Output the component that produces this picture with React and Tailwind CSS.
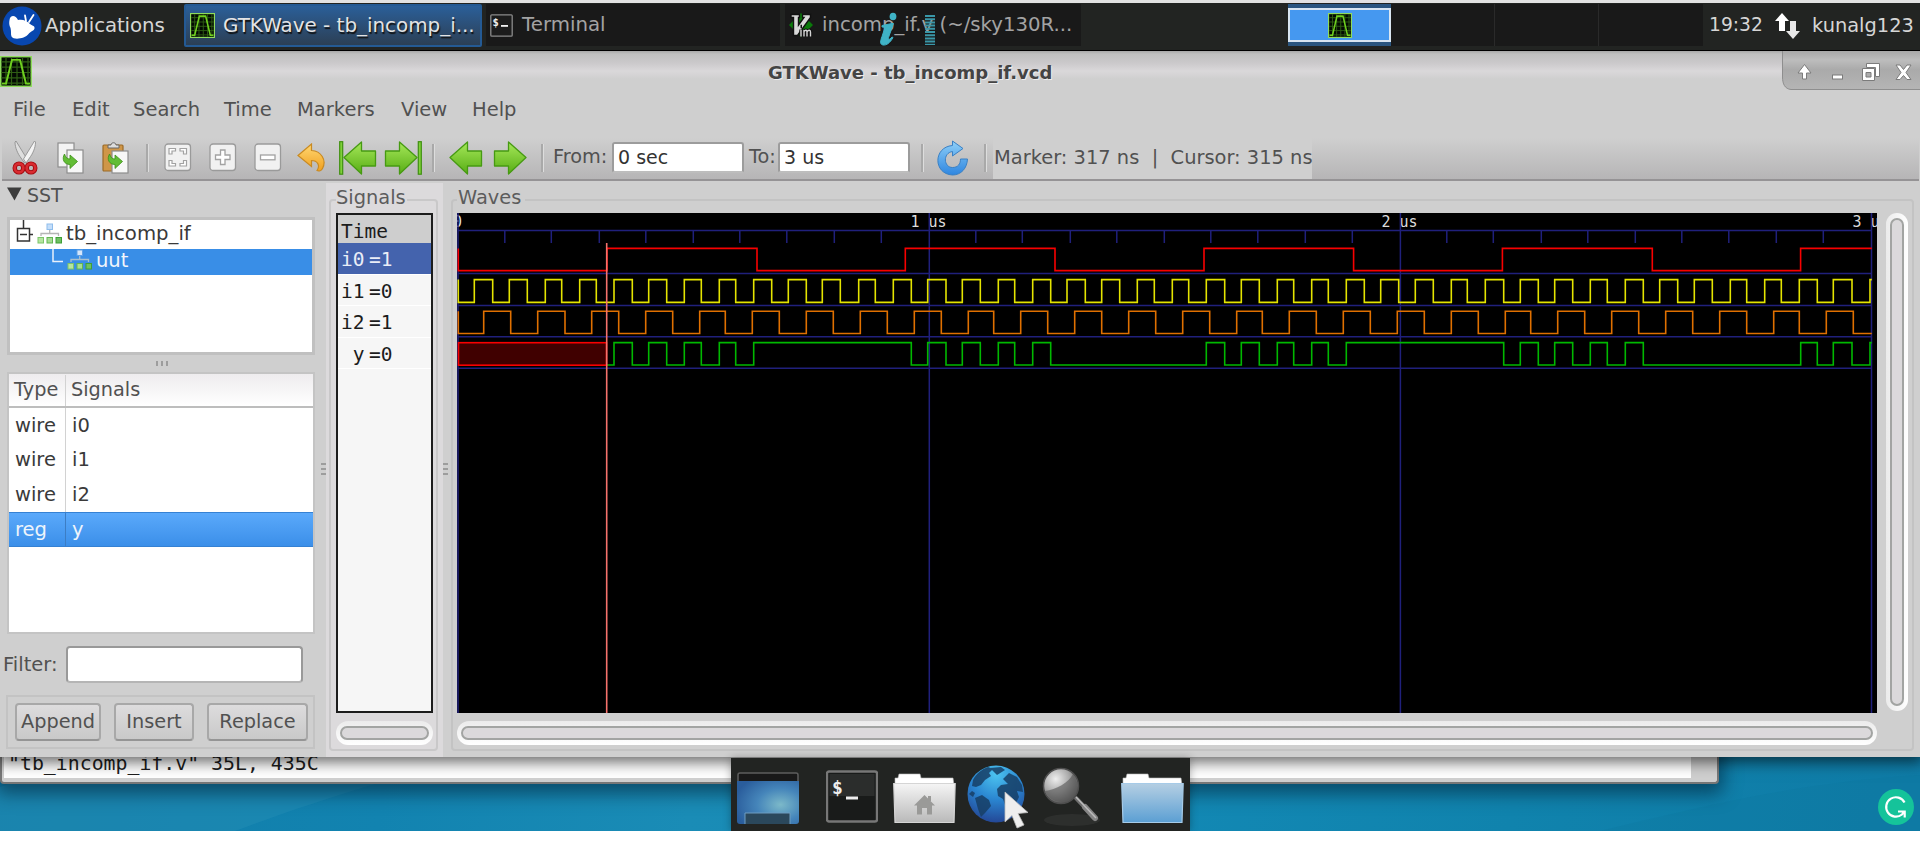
import React from "react";

const SANS = "font-['DejaVu_Sans',sans-serif]";
const MONO = "font-['DejaVu_Sans_Mono',monospace]";

/* ---------- icons ---------- */

function WaveLogo({ className }) {
  return (
    <svg className={className} viewBox="0 0 32 32" preserveAspectRatio="none">
      <rect width="32" height="32" fill="#8fdc5c" />
      <rect x="1.500" y="1.500" width="29" height="29" fill="#030a02" />
      <path d="M6 1.500V30.500M11.500 1.500V30.500M17 1.500V30.500M22.500 1.500V30.500M28 1.500V30.500M1.500 6H30.500M1.500 11.500H30.500M1.500 17H30.500M1.500 22.500H30.500M1.500 28H30.500" stroke="#2f5e14" strokeWidth="1.200" />
      <path d="M2 28.500H6L12 4H20L26 28.500H30" fill="none" stroke="#6fd01f" strokeWidth="2" />
    </svg>
  );
}

function MouseLogo() {
  return (
    <svg className="h-[40px] w-[40px]" viewBox="0 0 40 40">
      <circle cx="20" cy="20" r="19.500" fill="#0847b0" />
      <path d="M7.500 14C8 9 13.500 8.500 16 14C21 13 25 15 28 18C31 20 33 20 32.500 22.500C32 25 29 25 26.500 28C23 32.500 12 34.500 9.500 30.500C8.500 28 9.500 26 8.500 22C7 19 7 17 7.500 14Z" fill="#fff" />
      <path d="M24 15L23 9.500M27 16L31.500 9" stroke="#fff" strokeWidth="1.800" strokeLinecap="round" />
    </svg>
  );
}

function TerminalIcon({ className }) {
  return (
    <svg className={className} viewBox="0 0 52 52">
      <rect x="1" y="1" width="50" height="50" rx="2" fill="#191b1a" stroke="#777" strokeWidth="2.400" />
      <rect x="3.500" y="3.500" width="45" height="22" fill="#2b2d2c" />
      <text x="6" y="23" fontSize="18" fontWeight="bold" fill="#eee" className={MONO}>$</text>
      <rect x="20" y="26" width="12" height="3" fill="#eee" />
    </svg>
  );
}

function PanelTerminalIcon() {
  return (
    <svg className="h-[23px] w-[23px]" viewBox="0 0 23 23">
      <rect x=".8" y=".8" width="21.400" height="21.400" rx="1" fill="#1c1c1c" stroke="#8a8a8a" strokeWidth="1.300" />
      <text x="2.500" y="12" fontSize="10.500" fontWeight="bold" fill="#f0f0f0" className={MONO}>$</text>
      <rect x="11" y="11" width="7" height="1.800" fill="#f0f0f0" />
    </svg>
  );
}

function VimIcon() {
  return (
    <svg className="h-[25px] w-[24px]" viewBox="0 0 24 25">
      <path d="M12 0L24 12L12 24L0 12Z" fill="#0a7a0a" />
      <path d="M2 1.500H10.500V4.500H9.500V12L15 4.500H13.500V1.500H21.500V4.500L8.500 22.500H4.500V4.500H2Z" fill="#d9d9d9" stroke="#111" strokeWidth="1.400" />
      <path d="M12 16.500V23.500M15 23.500V17M15 18.500C16.500 16.500 18 17 18 19V23.500M18 19C19.500 16.500 21.500 17 21.500 19V23.500M11.500 13.500H13" stroke="#111" strokeWidth="3.400" fill="none" />
      <path d="M12 16.500V23.500M15 23.500V17M15 18.500C16.500 16.500 18 17 18 19V23.500M18 19C19.500 16.500 21.500 17 21.500 19V23.500" stroke="#d6d6d6" strokeWidth="1.400" fill="none" />
    </svg>
  );
}

function Gradients() {
  return (
    <svg className="absolute h-0 w-0">
      <defs>
        <linearGradient id="green" x1="0" y1="0" x2="0" y2="1">
          <stop offset="0" stopColor="#a6e85a" /><stop offset="1" stopColor="#57ad14" />
        </linearGradient>
        <linearGradient id="gold" x1="0" y1="0" x2="0" y2="1">
          <stop offset="0" stopColor="#ffd873" /><stop offset="1" stopColor="#f0a020" />
        </linearGradient>
        <linearGradient id="blue" x1="0" y1="0" x2="0" y2="1">
          <stop offset="0" stopColor="#8fd0f8" /><stop offset="1" stopColor="#2f86e0" />
        </linearGradient>
        <linearGradient id="paper" x1="0" y1="0" x2="0" y2="1">
          <stop offset="0" stopColor="#f5f5f5" /><stop offset="1" stopColor="#b9b9b9" />
        </linearGradient>
        <linearGradient id="sky" x1="0" y1="0" x2="0" y2="1">
          <stop offset="0" stopColor="#b5cfe3" /><stop offset="1" stopColor="#5b9fd3" />
        </linearGradient>
        <radialGradient id="globe" cx=".5" cy=".15" r=".9">
          <stop offset="0" stopColor="#4cc4f0" /><stop offset=".5" stopColor="#2a85d0" /><stop offset="1" stopColor="#23408f" />
        </radialGradient>
        <radialGradient id="screen" cx=".7" cy=".55" r=".75">
          <stop offset="0" stopColor="#7cb9c9" /><stop offset=".5" stopColor="#4585ba" /><stop offset="1" stopColor="#2a5d9c" />
        </radialGradient>
        <radialGradient id="lens" cx=".35" cy=".3" r=".7">
          <stop offset="0" stopColor="#eee" /><stop offset=".55" stopColor="#aaa" /><stop offset="1" stopColor="#5c5c5c" />
        </radialGradient>
      </defs>
    </svg>
  );
}

function Scissors() {
  return (
    <svg className="h-[34px] w-[27px]" viewBox="0 0 27 34">
      <path d="M3 1L4 0L15 18L12.500 22L9 17C6 13 3 7 3 1Z" fill="#dedede" stroke="#888" strokeWidth=".8" />
      <path d="M23.500 1L22.500 0L11.500 18L14 22L17.500 17C20.500 13 23.500 7 23.500 1Z" fill="#f4f4f4" stroke="#888" strokeWidth=".8" />
      <ellipse cx="7" cy="27" rx="4.300" ry="4.400" fill="none" stroke="#a30d12" strokeWidth="4.400" />
      <ellipse cx="19" cy="27" rx="4.300" ry="4.400" fill="none" stroke="#a30d12" strokeWidth="4.400" />
      <ellipse cx="7" cy="27" rx="4.300" ry="4.400" fill="none" stroke="#d92b30" strokeWidth="2.600" />
      <ellipse cx="19" cy="27" rx="4.300" ry="4.400" fill="none" stroke="#d92b30" strokeWidth="2.600" />
    </svg>
  );
}

const TURN = "M8.500 13C5.500 18 8 23.500 14 23.500V27.500L21.500 20.500L14 14V18C11.500 18 9.500 16.500 8.500 13Z";

function CopyIcon() {
  return (
    <svg className="h-[32px] w-[28px]" viewBox="0 0 28 32">
      <rect x="1" y="1" width="16" height="24" fill="#f3f3f3" stroke="#8d8d8d" strokeWidth="1.200" />
      <rect x="10" y="8" width="16" height="23" fill="#f7f7f7" stroke="#8d8d8d" strokeWidth="1.200" />
      <path d={TURN} transform="translate(-1 -1)" fill="#62bd35" stroke="#3c8f17" strokeWidth=".8" />
    </svg>
  );
}

function PasteIcon() {
  return (
    <svg className="h-[32px] w-[28px]" viewBox="0 0 28 32">
      <rect x="1" y="3" width="20" height="26" rx="1" fill="#cf9648" stroke="#9c6a26" strokeWidth="1.200" />
      <path d="M6 6V3H9C9 0 14 0 14 3H17V6Z" fill="#ddd" stroke="#666" strokeWidth="1" />
      <rect x="10" y="9" width="16" height="22" fill="#f7f7f7" stroke="#8d8d8d" strokeWidth="1.200" />
      <path d={TURN} transform="translate(-1 -1)" fill="#62bd35" stroke="#3c8f17" strokeWidth=".8" />
    </svg>
  );
}

function ZoomBox({ kind }) {
  return (
    <svg className="h-[29px] w-[28px]" viewBox="0 0 28 29">
      <rect x="1" y="1" width="25.500" height="26.500" rx="3" fill="#f1f1f1" stroke="#9a9a9a" strokeWidth="1.300" />
      {kind === "fit" && (
        <path d="M5 11V5.500H11.500V8H8V11ZM16 5.500H22.500V11H19.500V8H16ZM5 17.500V23H11.500V20.500H8V17.500ZM22.500 17.500V23H16V20.500H19.500V17.500Z" fill="#fff" stroke="#a2a2a2" strokeWidth="1.200" />
      )}
      {kind === "in" && (
        <path d="M11.500 7H16V12H21V16.500H16V21.500H11.500V16.500H6.500V12H11.500Z" fill="#fff" stroke="#a2a2a2" strokeWidth="1.300" />
      )}
      {kind === "out" && <rect x="6.500" y="12" width="14.500" height="4.800" fill="#fff" stroke="#a2a2a2" strokeWidth="1.300" />}
    </svg>
  );
}

function UndoIcon() {
  return (
    <svg className="h-[29px] w-[29px]" viewBox="0 0 29 29">
      <path d="M1 12.500L14.500 1V7.500C24 8 30 17 25.500 25.500C24.500 27.500 22 28.500 20 27.500C23.500 22.500 20.500 17.500 14.500 17.500V23.500Z" fill="url(#gold)" stroke="#c98a22" strokeWidth="1.200" />
    </svg>
  );
}

function ArrowIcon({ right, bar }) {
  const w = bar ? 38 : 34;
  return (
    <svg className={(bar ? "w-[38px]" : "w-[34px]") + " h-[34px]" + (right ? " -scale-x-100" : "")} viewBox={`0 0 ${w} 34`}>
      {bar && <rect x=".7" y=".7" width="3" height="32.500" fill="#7fd03a" stroke="#3f8f10" strokeWidth="1.200" />}
      <g transform={bar ? "translate(4 0)" : ""}>
        <path d="M1 16.500L18.500 1V10H32.500V25H18.500V33Z" fill="url(#green)" stroke="#469a12" strokeWidth="1.300" strokeLinejoin="round" />
      </g>
    </svg>
  );
}

function ReloadIcon() {
  return (
    <svg className="h-[36px] w-[31px]" viewBox="0 0 31 36">
      <path d="M15.500 1L26 8.500L15.500 16V11.500C5.500 13 6.500 27.500 15.500 27.500C21 27.500 23.500 24 23.500 19H30.500C30 28.500 24 35 15.500 35C-4 34 -4 7 15.500 5.500Z" fill="url(#blue)" stroke="#3a80c4" strokeWidth="1" />
    </svg>
  );
}

function HierarchyIcon({ selected }) {
  return (
    <svg className="h-[21px] w-[26px] shrink-0" viewBox="0 0 26 21">
      <rect x="10" y="1" width="5.500" height="5.500" fill={selected ? "#d6e6fa" : "#c4defa"} stroke={selected ? "#5d9fe8" : "#8fbdec"} />
      <path d="M12.700 7V10M4 13V10.500H21.500V13" fill="none" stroke={selected ? "#a9c0cf" : "#b5b5b5"} strokeWidth="1.300" />
      <rect x="1" y="14.500" width="5.500" height="5.500" fill="#b5e5a0" stroke="#7cc46a" />
      <rect x="10" y="14.500" width="5.500" height="5.500" fill="#a6dd93" stroke="#62b552" />
      <rect x="19" y="14.500" width="5.500" height="5.500" fill="#6fc062" stroke="#3f9f37" />
    </svg>
  );
}

/* ---------- top panel ---------- */

function TopPanel() {
  return (
    <div className={`flex h-[48px] w-full items-start border-b border-black bg-[#222422] text-[19px] text-[#d6d6d6] ${SANS}`}>
      <div className="flex h-[45px] w-[184px] items-center pl-[2px]">
        <MouseLogo />
        <span className="ml-[3px] text-[19.800px] leading-[24px] tracking-[-0.1px]">Applications</span>
      </div>
      <div className="mt-[1px] flex h-[43px] w-[298px] items-center rounded-[2px] border-2 border-[#245a94] bg-linear-to-b from-[#2a5f99] to-[#2b3f55] pl-[4px] text-[#e4e4e4]">
        <WaveLogo className="h-[25px] w-[25px]" />
        <span className="ml-[8px] mt-[1px] whitespace-nowrap text-[19.900px] [text-shadow:1px_2px_1px_#111]">GTKWave - tb_incomp_i...</span>
      </div>
      <div className="ml-[4px] mt-[1px] flex h-[42px] w-[294px] items-center bg-[#191919] pl-[4px] text-[#a3a3a3]">
        <PanelTerminalIcon />
        <span className="ml-[9px] text-[19.800px]">Terminal</span>
      </div>
      <div className="relative ml-[5px] mt-[1px] flex h-[42px] w-[296px] items-center bg-[#191919] pl-[4px] text-[#a3a3a3]">
        <VimIcon />
        <span className="ml-[9px] whitespace-nowrap text-[19.700px]">incomp_if.v (~/sky130R...</span>
        <svg className="absolute left-[95px] top-[8px] h-[34px] w-[60px]" viewBox="0 0 60 34">
          <ellipse cx="13" cy="4.500" rx="3.400" ry="3.800" fill="#3fb3c6" />
          <path d="M2 13.500L12 11.500H13.500L8.500 25.500C8 28 9.500 28 12 25L13 25.500C10 31 6.500 33.500 3 33C-.5 32.500 .5 28.500 2 24.500L4.500 17C5 15.500 4 15 2 15Z" fill="#3fb3c6" stroke="#3fb3c6" strokeWidth="1" />
          <path d="M50 3V33" stroke="#3a97a8" strokeWidth="10" strokeDasharray="2 1.200" />
        </svg>
      </div>
      <div className="ml-[207px] mt-[1px] flex h-[42px] w-[415px] bg-[#191919]">
        <div className="flex w-[103px] flex-col border-y-[4px] border-[#2b5680]">
          <div className="flex flex-1 items-center justify-center border-2 border-[#d9e6f2] bg-[#4598f0]">
            <WaveLogo className="h-[25px] w-[24px]" />
          </div>
        </div>
        <div className="w-[104px] border-r border-[#2a2a2a]" />
        <div className="w-[104px] border-r border-[#2a2a2a]" />
        <div className="flex-1" />
      </div>
      <div className="flex h-[45px] items-center">
        <span className="ml-[6px] w-[65px] text-[18.700px]">19:32</span>
        <svg className="h-[26px] w-[27px]" viewBox="0 0 27 26">
          <path d="M8 0L15 8H11V18H5V8H1Z" fill="#fff" />
          <path d="M19 26L26 18H22V8H16V18H12Z" fill="#e8e8e8" />
        </svg>
        <span className="ml-[11px] text-[19.400px]">kunalg123</span>
      </div>
    </div>
  );
}

/* ---------- window chrome ---------- */

function TitleBar() {
  return (
    <div className="relative flex h-[39px] bg-[linear-gradient(#a8a8a8_0px,#c0c0c0_3px,#cbc9cb_12px,#dad8da_20px,#cfcfcf_28px,#cfcfcf_100%)]">
      <WaveLogo className="mt-[5px] h-[31px] w-[32px]" />
      <span className="mt-[11px] ml-[736px] text-[18px] leading-[22px] font-bold whitespace-nowrap text-[#444] [text-shadow:1px_1px_0_#eee]">
        GTKWave - tb_incomp_if.vcd
      </span>
      <svg className="ml-auto h-[39px] w-[138px]" viewBox="0 0 138 39">
        <defs>
          <linearGradient id="ctl" x1="0" y1="0" x2="0" y2="1">
            <stop offset="0" stopColor="#a5a5a5" /><stop offset=".25" stopColor="#bdbdbd" /><stop offset=".5" stopColor="#aaa" /><stop offset="1" stopColor="#b5b5b5" />
          </linearGradient>
        </defs>
        <path d="M.5 -1V26C.5 33 3 38 9 38.500H139V-1Z" fill="url(#ctl)" stroke="#8e8e8e" />
        <g stroke="#7b7b7b" strokeWidth="1" fill="#fff">
          <path d="M22.500 13.500L29 22H24.500V28H20.500V22H16Z" />
          <rect x="50.500" y="24" width="10" height="4" />
          <path d="M84.500 12.500H97.500V25.500H93.500V16.500H84.500Z" />
          <path d="M80.500 17.500H92.500V29.500H80.500ZM84 21.500V26H89V21.500Z" fillRule="evenodd" />
          <path d="M114 14H118L121.500 18.500L125 14H129L124 21.500L129 28.500H125L121.500 24.500L118 28.500H114L119 21.500Z" />
        </g>
      </svg>
    </div>
  );
}

function MenuBar() {
  return (
    <div className="flex h-[48px] items-start pt-[8px] pl-[13px] text-[19.500px] leading-[24px] text-[#515151]">
      <span className="w-[59px]">File</span>
      <span className="w-[61px]">Edit</span>
      <span className="w-[91px]">Search</span>
      <span className="w-[73px]">Time</span>
      <span className="w-[104px]">Markers</span>
      <span className="w-[71px]">View</span>
      <span>Help</span>
    </div>
  );
}

function Sep() {
  return <div className="h-[28px] w-[3px] border-l-2 border-[#a9a9a9] bg-[#ddd]" />;
}

function ToolBar() {
  return (
    <div className="flex h-[45px] items-start border-b-2 border-[#cfcfcf] pl-[2px]">
      <div className="flex h-[43px] w-[1917px] items-center border-b-2 border-[#959395] bg-linear-to-b from-[#cfcfcf] to-[#b6b5b6] text-[19.300px] text-[#515151]">
        <div className="mb-[2px] ml-[10px] flex items-center">
          <div className="w-[45px]"><Scissors /></div>
          <div className="w-[45px]"><CopyIcon /></div>
          <div className="w-[44px]"><PasteIcon /></div>
          <div className="w-[18px]"><Sep /></div>
          <div className="w-[45px]"><ZoomBox kind="fit" /></div>
          <div className="w-[45px]"><ZoomBox kind="in" /></div>
          <div className="w-[43px]"><ZoomBox kind="out" /></div>
          <div className="w-[42px]"><UndoIcon /></div>
          <div className="w-[45px]"><ArrowIcon bar /></div>
          <div className="w-[48px]"><ArrowIcon right bar /></div>
          <div className="w-[17px]"><Sep /></div>
          <div className="w-[44px]"><ArrowIcon /></div>
          <div className="w-[48px]"><ArrowIcon right /></div>
          <div className="w-[12px]"><Sep /></div>
          <span className="w-[59px]">From:</span>
          <div className="flex h-[31px] w-[132px] items-center rounded-[3px] border-2 border-[#9c9c9c] border-b-[#bdbdbd] bg-white pl-[4px] text-[19px] text-[#333]">0 sec</div>
          <span className="ml-[5px] w-[29px]">To:</span>
          <div className="flex h-[31px] w-[132px] items-center rounded-[3px] border-2 border-[#9c9c9c] border-b-[#bdbdbd] bg-white pl-[4px] text-[19px] text-[#333]">3 us</div>
          <div className="ml-[11px] w-[16px]"><Sep /></div>
          <div className="w-[47px]"><ReloadIcon /></div>
          <div className="w-[9px]"><Sep /></div>
        </div>
        <div className="flex h-full w-[319px] items-center bg-[#cfcfcf] pb-[2px] pl-[1px] text-[19.450px] whitespace-pre">Marker: 317 ns  |  Cursor: 315 ns</div>
      </div>
    </div>
  );
}

/* ---------- left pane ---------- */

function Grip({ vertical }) {
  return (
    <div className={vertical ? "flex flex-col gap-[3px]" : "flex gap-[3px]"}>
      {[0, 1, 2].map((i) => (
        <div key={i} className={vertical ? "h-[2px] w-[5px] bg-[#9d9d9d]" : "h-[5px] w-[2px] bg-[#9d9d9d]"} />
      ))}
    </div>
  );
}

function SignalRow({ type, name, selected }) {
  return (
    <div className={"flex h-[34.700px] items-center " + (selected ? "border-y border-[#3581d3] bg-linear-to-b from-[#5aa9fb] to-[#3b8fe9] text-[#eef4fb]" : "text-[#3a3a3a]")}>
      <span className={"flex h-full w-[57px] items-center border-r pl-[6px] " + (selected ? "border-[#3c7dc4]" : "border-[#d2d2d2]")}>{type}</span>
      <span className="pl-[6px]">{name}</span>
    </div>
  );
}

function GtkButton({ children, className }) {
  return (
    <button className={"h-[38px] rounded-[4px] border-2 border-[#a8a8a8] border-b-[#959595] bg-linear-to-b from-[#dddcdd] to-[#c9c9c9] text-center text-[19.300px] text-[#515151] " + className}>
      {children}
    </button>
  );
}

function LeftPane() {
  return (
    <div className="flex w-[326px] shrink-0">
      <div className="flex w-[318px] flex-col text-[19.500px] text-[#515151]">
        <div className="flex h-[34px] items-start pl-[7px]">
          <svg className="mt-[4px] h-[14px] w-[15px]" viewBox="0 0 15 14"><path d="M0 .5H14.500L7.500 13.500Z" fill="#3c3c3c" /></svg>
          <span className="ml-[5px] leading-[25px] text-[19px]">SST</span>
        </div>
        <div className="ml-[7px] flex h-[138px] w-[308px] flex-col border-[3px] border-[#c0c0c0] bg-white">
          <div className="flex h-[29px] items-start pl-[6px]">
            <svg className="h-[24px] w-[17px]" viewBox="0 0 17 24">
              <path d="M7.500 0V8M13.500 14.500H17" stroke="#333" strokeWidth="1.500" />
              <rect x="1.500" y="8.500" width="12" height="12.500" fill="#fff" stroke="#333" strokeWidth="1.500" />
              <path d="M4 14.500H11" stroke="#333" strokeWidth="1.500" />
            </svg>
            <div className="ml-[4px] mt-[3px]"><HierarchyIcon /></div>
            <span className="ml-[3px] mt-[2px] text-[19.700px] leading-[24px] text-[#3a3a3a]">tb_incomp_if</span>
          </div>
          <div className="flex h-[26px] items-start bg-[#398ee7] pl-[42px]">
            <svg className="h-[16px] w-[12px]" viewBox="0 0 12 16"><path d="M1 0V12.500H11" fill="none" stroke="#e8f0fa" strokeWidth="1.500" /></svg>
            <div className="ml-[3px]"><HierarchyIcon selected /></div>
            <span className="ml-[3px] leading-[24px] text-[#f2f6fb]">uut</span>
          </div>
        </div>
        <div className="flex h-[17px] items-center pl-[156px]"><Grip /></div>
        <div className="ml-[7px] h-[262px] w-[308px] border-2 border-[#c4c4c4] bg-white">
          <div className="flex h-[34px] items-center border-b-2 border-[#bdbdbd] bg-linear-to-b from-[#eeecee] to-white pt-[1px] text-[19.300px]">
            <span className="flex h-full w-[57px] items-center border-r border-[#d2d2d2] pl-[5px]">Type</span>
            <span className="pl-[5px]">Signals</span>
          </div>
          <SignalRow type="wire" name="i0" />
          <SignalRow type="wire" name="i1" />
          <SignalRow type="wire" name="i2" />
          <SignalRow type="reg" name="y" selected />
        </div>
        <div className="flex h-[61px] items-center pl-[3px]">
          <span className="w-[63px]">Filter:</span>
          <div className="h-[37px] w-[237px] rounded-[4px] border-2 border-[#999] border-b-[#b5b5b5] bg-white" />
        </div>
        <div className="ml-[6px] flex h-[54px] w-[309px] items-center border-2 border-[#c3c3c3] pl-[7px]">
          <GtkButton className="w-[86px]">Append</GtkButton>
          <GtkButton className="ml-[13px] w-[80px]">Insert</GtkButton>
          <GtkButton className="ml-[13px] w-[101px]">Replace</GtkButton>
        </div>
      </div>
      <div className="mt-[280px] ml-[3px]"><Grip vertical /></div>
    </div>
  );
}

/* ---------- signals pane ---------- */

function NameRow({ name, value, selected }) {
  return (
    <div className={"flex h-[31.500px] items-center border-b-[1.500px] border-white pt-[3px] pl-[3px] whitespace-pre " + (selected ? "bg-[#4463ad] text-[#e9edf7]" : "")}>
      <span className="w-[28px]">{name}</span>
      <span>={value}</span>
    </div>
  );
}

function HScroll({ className }) {
  return (
    <div className={"flex h-[24px] items-center rounded-full bg-linear-to-b from-[#ebebeb] to-white px-[4px] " + className}>
      <div className="h-[14px] flex-1 rounded-full border-2 border-[#a2a4a2] bg-[#dbd9db]" />
    </div>
  );
}

function SignalsPane() {
  return (
    <div className="flex w-[117px] shrink-0 flex-col bg-[#dcdadc] pt-[16px] pl-[3px]">
      <div className="flex h-[552px] w-[109px] flex-col rounded-[4px] border-2 border-[#c9c8c9] pl-[5px]">
        <span className="mt-[-16px] mb-[4px] h-[24px] w-[71px] bg-[#dcdadc] text-[19.400px] leading-[25px] text-[#5c5c5c]">Signals</span>
        <div className={`h-[500px] w-[97px] border-2 border-[#1c1c1c] bg-[#f6f6f6] text-[19.500px] text-[#1c1c1c] ${MONO}`}>
          <div className="flex h-[28px] items-center bg-[#cecece] pl-[3px] pt-[6px]">Time</div>
          <NameRow name="i0" value="1" selected />
          <NameRow name="i1" value="0" />
          <NameRow name="i2" value="1" />
          <NameRow name=" y" value="0" />
        </div>
        <HScroll className="mt-[8px] w-[97px]" />
      </div>
    </div>
  );
}

/* ---------- waves ---------- */

const ORIGIN = 458.3;
const END = 1871.8;
const at = (base, list) => list.map((v) => base + v / 3);

const I0 = [607, 757, 905.3, 1055, 1204, 1353.6, 1502.4, 1652.3, 1800.6];
const I1 = [
  ...at(440, [103, 158, 208, 262, 316, 365, 419, 469, 522, 577, 626, 680, 733, 784, 838, 887, 941, 995, 1045, 1099, 1147, 1201, 1256, 1306, 1360, 1414, 1463, 1518]),
  ...at(940, [67, 121, 175, 224, 278, 332, 381, 436, 485, 539, 592, 643, 697, 746, 799, 854, 904, 958, 1012, 1061, 1115, 1165, 1219, 1273, 1322, 1376, 1426, 1480]),
  ...at(1420, [94, 142, 196, 251, 301, 355, 404, 458, 511, 562, 616, 670, 719, 773, 823, 877, 931, 980, 1034, 1084, 1138, 1192, 1240, 1296, 1350]),
];
const I2 = [
  ...at(440, [131, 212, 293, 375, 455, 536, 617, 698, 779, 856, 937, 1018, 1099, 1180, 1261, 1342, 1423, 1504]),
  ...at(940, [85, 161, 242, 323, 404, 485, 566, 647, 728, 809, 890, 967, 1048, 1129, 1210, 1291, 1372, 1453]),
  ...at(1420, [94, 175, 256, 332, 413, 494, 575, 656, 737, 818, 899, 980, 1061, 1138, 1219, 1300]),
];
const Y = [
  ...at(440, [522, 577, 626, 680, 733, 784, 838, 887, 941, 1414, 1463, 1518]),
  ...at(940, [67, 121, 175, 224, 278, 332, 799, 854, 904, 958, 1012, 1061, 1115, 1165, 1219]),
  ...at(1420, [251, 301, 355, 404, 458, 511, 562, 616, 670, 1142, 1192, 1240, 1296, 1350]),
];

// Every signal starts low and toggles at each listed edge.
function trace(edges, high, low, start = ORIGIN, lead = true) {
  let d = lead ? `M${start} ${high}V${low}` : `M${start} ${low}`;
  let up = false;
  edges.forEach((x) => {
    up = !up;
    d += `H${x.toFixed(1)}V${up ? high : low}`;
  });
  return d + `H${END}`;
}

const TICKS = [46.5, 93, 141, 187.5, 235, 281.5, 328.5, 376, 423];

function WaveCanvas() {
  return (
    <svg className="h-[500px] w-[1420px] bg-black" viewBox="457 213 1420 500">
      <g fill="#dcdcdc" fontSize="15" className={MONO}>
        <text x="453" y="226.500">0</text>
        <text x="910.500" y="226.500" xmlSpace="preserve">1 us</text>
        <text x="1381.500" y="226.500" xmlSpace="preserve">2 us</text>
        <text x="1852.500" y="226.500" xmlSpace="preserve">3 us</text>
      </g>
      <g stroke="#20207c" strokeWidth="1.500" fill="none">
        <path d={`M458 230.500H${END}M458 273.600H${END}M458 305.400H${END}M458 336.700H${END}M458 368.300H${END}`} />
        {[0, 1, 2].map((u) =>
          TICKS.map((t) => <path key={`${u}-${t}`} d={`M${458.3 + u * 471 + t} 231V243`} />)
        )}
        <path d="M458 213V713M929.300 213V713M1400.400 213V713M1871.500 213V713" />
      </g>
      <g fill="none" strokeWidth="1.600">
        <path d={trace(I0, 248.4, 270.6)} stroke="#f80000" />
        <path d={trace(I1, 279.6, 302.4)} stroke="#e4e400" />
        <path d={trace(I2, 311.3, 333.5)} stroke="#e07000" />
        <path d={trace(Y, 342.6, 365, 607, false)} stroke="#00b800" />
        <rect x="458.500" y="342.700" width="148" height="22.500" fill="#400000" stroke="#f80000" />
        <path d="M606.700 243V713" stroke="#f5726c" />
      </g>
    </svg>
  );
}

function WavesPane() {
  return (
    <div className="flex flex-1">
      <div className="mt-[280px] w-[8px]"><Grip vertical /></div>
      <div className="mt-[16px] h-[552px] w-[1463px] rounded-[4px] border-2 border-[#c3c3c3]">
        <div className="mt-[-16px] mb-[4px] ml-[4px] h-[24px] w-[68px] bg-[#cfcfcf] pl-[1px] text-[19.400px] leading-[25px] text-[#5c5c5c]">Waves</div>
        <div className="flex pl-[4px]">
          <div className="flex flex-col">
            <WaveCanvas />
            <HScroll className="mt-[8px] w-[1420px]" />
          </div>
          <div className="ml-[9px] flex h-[498px] w-[22px] flex-col rounded-full bg-linear-to-r from-[#ebebeb] to-white px-[4px] py-[5px]">
            <div className="w-[14px] flex-1 rounded-full border-2 border-[#a2a4a2] bg-[#dbd9db]" />
          </div>
        </div>
      </div>
    </div>
  );
}

/* ---------- desktop ---------- */

function Folder({ home }) {
  return (
    <svg className="h-[51px] w-[63px]" viewBox="0 0 63 51">
      <path d="M2 12V5H5L6 1H27L28 5H60L61 12Z" fill="#fff" stroke="#bbb" strokeWidth=".6" />
      <path d="M.7 10.500H62.200L61 49.500H2Z" fill={home ? "url(#paper)" : "url(#sky)"} stroke={home ? "#d5d5d5" : "#a6cbe8"} strokeWidth="1.200" />
      {home && <path d="M31.500 22L42 32.500H39V41.500H34V35H29V41.500H24V32.500H21L25 28.500ZM35 23H38V28H35Z" fill="#9a9a98" />}
    </svg>
  );
}

function Dock() {
  return (
    <div className="absolute top-[707px] left-[731px] z-20 flex h-[73px] w-[459px] items-start bg-[#222422] shadow-[0_0_8px_rgba(0,0,0,.3)]">
      <svg className="mt-[14px] ml-[5px] h-[53px] w-[64px]" viewBox="0 0 64 53">
        <path d="M2 10V3C2 1.500 3 1 4 1H60C61 1 62 1.500 62 3V10" fill="#191919" stroke="#5d5d5d" strokeWidth="1.500" />
        <path d="M1 9H63V49C63 51 62 52 60 52H4C2 52 1 51 1 49Z" fill="url(#screen)" />
        <path d="M9 52V41H54V52" fill="#2b485c" stroke="#6f9cc0" strokeWidth="1" />
      </svg>
      <TerminalIcon className="mt-[12px] ml-[26px] h-[53px] w-[52px]" />
      <div className="mt-[15px] ml-[15px]"><Folder home /></div>
      <svg className="mt-[5px] ml-[11px] h-[66px] w-[64px]" viewBox="0 0 64 66">
        <circle cx="29" cy="31" r="28.500" fill="url(#globe)" />
        <g fill="#173f66" opacity=".85">
          <path d="M6 17C9 11 15 6 21 4L26 6L22 10L24 13L18 17L14 22L9 24L5 23Z" />
          <path d="M8 35L15 32L22 37L24 43L18 50L14 54L11 46Z" />
          <path d="M23 5L34 4L38 7L30 12L27 9Z" />
          <path d="M36 16L42 10L50 14L55 22L56 29L50 28L52 34L48 42L38 42L36 36L31 33L30 26L34 22L41 21L38 18Z" />
          <path d="M2 31L5 28L8 30L6 34Z" />
        </g>
        <path d="M38 29L61 49.500L51 50.500L57 62L50 65L45 52.500L38 59Z" fill="#eee" stroke="#bbb" strokeWidth=".8" />
      </svg>
      <svg className="mt-[9px] ml-[10px] h-[62px] w-[62px]" viewBox="0 0 62 62">
        <ellipse cx="31" cy="53" rx="28" ry="6" fill="#353735" opacity=".6" />
        <path d="M35 31L53 50" stroke="#6f6f6f" strokeWidth="4" strokeLinecap="round" />
        <path d="M44 40L54 51" stroke="#858585" strokeWidth="6" strokeLinecap="round" />
        <path d="M35 30L55 51" stroke="#bcbcbc" strokeWidth="1.500" />
        <circle cx="20" cy="19" r="17.500" fill="url(#lens)" stroke="#4e4e4e" strokeWidth="1.500" />
        <path d="M4 24C15 23 28 15 32 7C38 14 38 25 32 31C24 38 8 36 4 24Z" fill="#555" opacity=".6" />
      </svg>
      <div className="mt-[15px] ml-[18px]"><Folder /></div>
    </div>
  );
}

function BackWindow() {
  return (
    <div className="absolute top-[600px] left-0 flex h-[133px] w-[1719px] rounded-b-[4px] border-b-2 border-l-2 border-r-2 border-[#777] bg-[#cfcfcf] pb-[4px] pl-[2px] shadow-[0_6px_18px_4px_rgba(0,30,50,.55)]">
      <div className={`flex w-[1687px] items-end bg-white pb-[2px] pl-[4px] text-[19.850px] leading-[24px] whitespace-pre text-[#1d1d1d] ${MONO}`}>
        "tb_incomp_if.v" 35L, 435C
      </div>
    </div>
  );
}

export default function App() {
  return (
    <div className={`relative h-[864px] w-[1920px] overflow-hidden bg-white ${SANS}`}>
      <Gradients />
      <div className="h-[3px] bg-[#e2e2e2]" />
      <TopPanel />
      <div className="relative h-[780px] overflow-hidden bg-[linear-gradient(100deg,#117ba6_0%,#1283b0_25%,#1a8cb6_40%,#1389b5_60%,#1083ad_80%,#0f7ba6_100%)]">
        <svg className="absolute top-[706px] left-0 h-[74px] w-[1920px]" viewBox="0 0 1920 74">
          <path d="M90 0H480C380 22 300 50 235 74H0V30Z" fill="#2b93b8" opacity=".35" />
          <path d="M1600 74C1700 50 1800 25 1920 18V74Z" fill="#0d76a0" opacity=".3" />
        </svg>
        <BackWindow />
        <div className="relative z-10 h-[706px] bg-[#cfcfcf] shadow-[0_2px_14px_3px_rgba(0,0,0,.6)]">
          <TitleBar />
          <MenuBar />
          <ToolBar />
          <div className="flex h-[574px]">
            <LeftPane />
            <SignalsPane />
            <WavesPane />
          </div>
        </div>
        <Dock />
        <svg className="absolute top-[738px] left-[1878px] z-20 h-[36px] w-[36px]" viewBox="0 0 36 36">
          <circle cx="18" cy="18" r="18" fill="#15c39a" />
          <path d="M26.500 13.500A9.700 9.700 0 1 0 24 25.500L26 22.500M20 22.500H26.700V28.500" fill="none" stroke="#fff" strokeWidth="2.200" />
        </svg>
      </div>
    </div>
  );
}
